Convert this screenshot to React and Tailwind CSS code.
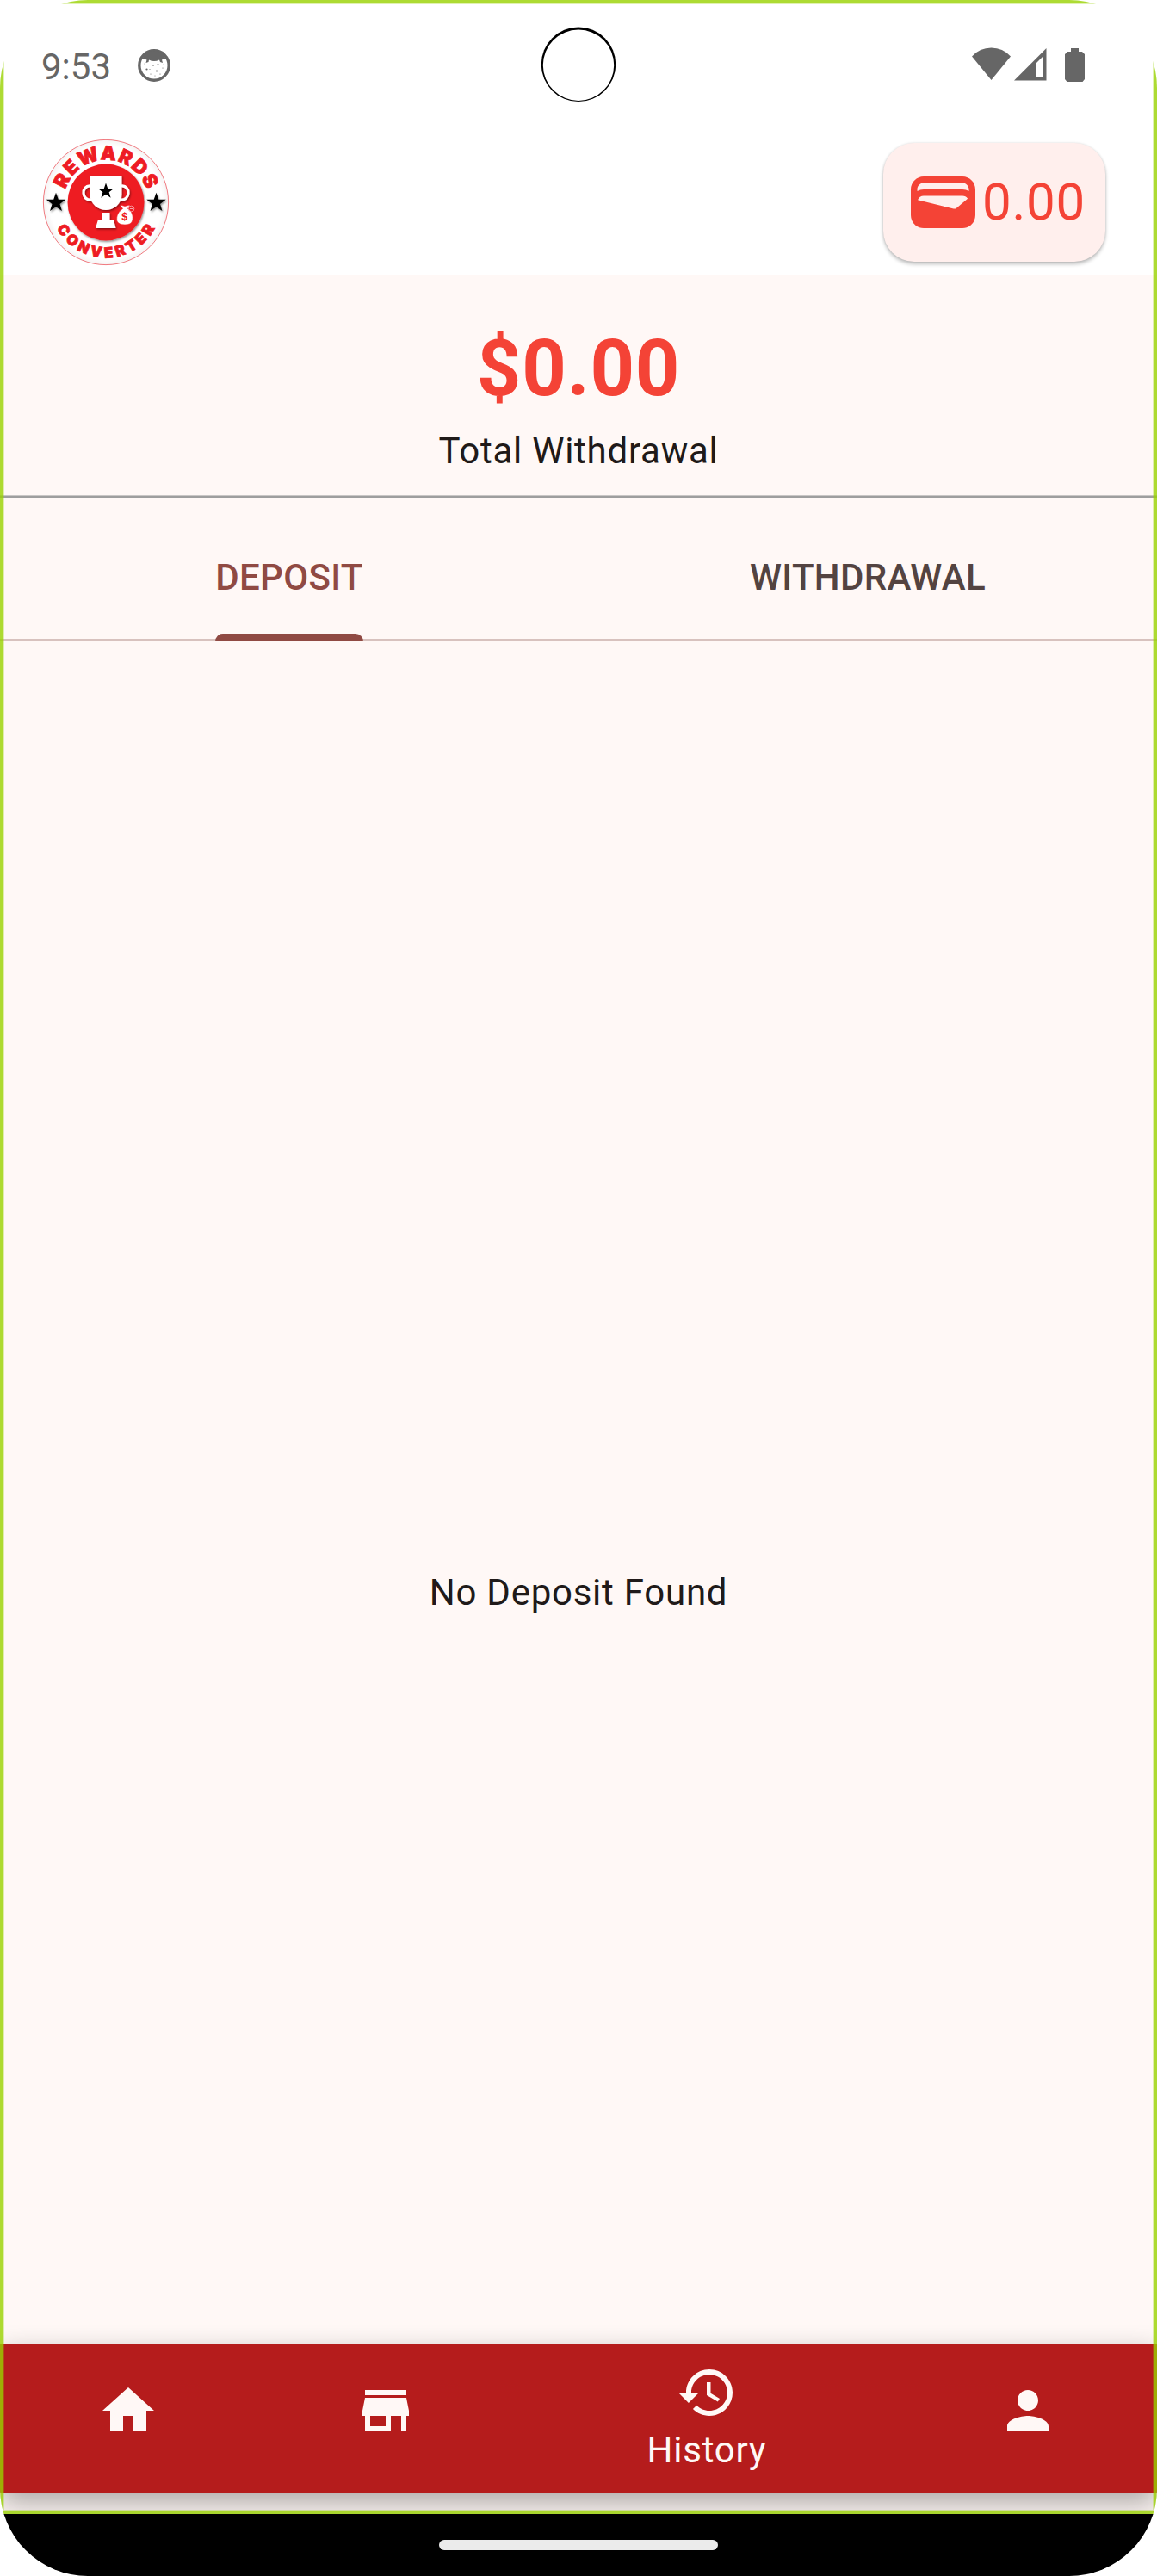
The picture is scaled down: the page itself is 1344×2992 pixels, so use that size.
import React from "react";

function Star({ cx, cy, r }) {
  const pts = Array.from({ length: 10 }, (_, i) => {
    const a = (Math.PI / 5) * i - Math.PI / 2;
    const d = i % 2 ? r * 0.4 : r;
    return `${cx + d * Math.cos(a)},${cy + d * Math.sin(a)}`;
  }).join(" ");
  return <polygon points={pts} fill="#000" />;
}

function Logo() {
  return (
    <svg width="152" height="152" viewBox="-76 -76 152 152" className="block">
      <defs>
        <path id="arcTop" d="M-46.200 16.800A49.200 49.200 0 1 1 46.200 16.800" />
        <path id="arcBottom" d="M-64.500 0A64.500 64.500 0 0 0 64.500 0" />
        <filter id="soft" x="-20%" y="-20%" width="150%" height="150%">
          <feDropShadow dx="1" dy="1.5" stdDeviation="1.2" floodColor="#000" floodOpacity="0.45" />
        </filter>
        <radialGradient id="rim">
          <stop offset="0.9" stopColor="#fff" />
          <stop offset="1" stopColor="#f5f3f3" />
        </radialGradient>
      </defs>
      <circle r="72.6" fill="url(#rim)" stroke="#ee6a70" strokeWidth="0.9" />
      <circle r="44.5" fill="#ee1c24" filter="url(#soft)" />
      <g fill="#ee1c24" stroke="#ee1c24" strokeWidth="0.8" fontFamily="Inter, sans-serif" fontWeight="900" textAnchor="middle">
        <text fontSize="22.5" letterSpacing="1.5">
          <textPath href="#arcTop" startOffset="50.4%">REWARDS</textPath>
        </text>
        <text fontSize="17" letterSpacing="4">
          <textPath href="#arcBottom" startOffset="51%">CONVERTER</textPath>
        </text>
      </g>
      <g filter="url(#soft)">
        <Star cx={-58} cy={0.5} r={11.8} />
        <Star cx={58.5} cy={0.5} r={11.8} />
      </g>
      <g filter="url(#soft)">
        <path d="M-18 -19C-29 -20 -29 -1 -16 -3M18 -19C29 -20 29 -1 16 -3" fill="none" stroke="#fff" strokeWidth="3.2" />
        <path d="M-18.5 -31H18.5V-9C18.5 2 9 9 0 9S-18.5 2 -18.5 -9Z" fill="#fff" />
        <path d="M-4.5 12H4.5V20H9L11.5 30H-12L-9 20H-4.5Z" fill="#fff" />
      </g>
      <Star cx={0} cy={-13} r={9.6} />
      <path d="M16.500 3L22 4.500L28 3L25.500 7.500C30 10 32.500 16 30.500 22Q29 26 22 26T13 22C11.500 16 15 10 19.500 7.500Z" fill="#fff" stroke="#ee1c24" strokeWidth="0.6" />
      <circle cx="29.500" cy="7.500" r="3.300" fill="none" stroke="#f7a5a8" strokeWidth="0.9" />
      <path d="M27.800 7.500H31.200" stroke="#f7a5a8" />
      <text x="21.800" y="21" textAnchor="middle" fontSize="11.500" fontWeight="700" fontFamily="Inter, sans-serif" fill="#ee1c24">$</text>
    </svg>
  );
}

function StatusBar() {
  return (
    <div className="flex h-[154px] justify-between pl-[48px] pr-[84px]">
      <div className="flex w-[261px] items-start">
        <span className="mt-[53px] w-[112px] text-[42px] leading-[50px] text-[#666]">9:53</span>
        <svg width="38" height="38" viewBox="0 0 38 38" className="mt-[57px]">
          <circle cx="19" cy="19" r="17.2" fill="#fff" stroke="#666" strokeWidth="3.400" />
          <path d="M5 12Q9 2 19 2T33 12L30 11.500L28 12.500L29 16L26 15L25 12.500Q19 15.500 13 12.500L12.500 15L9.500 16L10.500 12.500L8 11.500Z" fill="#666" />
          <g fill="#666">
            <circle cx="10.500" cy="23.500" r="1.100" /><circle cx="23.500" cy="18" r="1" /><circle cx="22" cy="25.500" r="1.100" />
            <circle cx="18" cy="19.500" r="0.600" /><circle cx="29" cy="22" r="0.600" /><circle cx="15" cy="29" r="0.600" />
            <circle cx="26" cy="29" r="0.600" /><circle cx="14" cy="23.500" r="0.500" /><circle cx="8" cy="17" r="0.500" />
            <circle cx="20" cy="31" r="0.500" /><circle cx="30" cy="18" r="0.500" />
          </g>
        </svg>
      </div>
      <div className="flex w-[726px] justify-center">
        <svg width="88" height="88" viewBox="0 0 88 88" className="mt-[31px]">
          <circle cx="44" cy="43.800" r="43.300" fill="#000" />
          <circle cx="44" cy="44.700" r="41.200" fill="#fff" />
        </svg>
      </div>
      <div className="flex w-[225px] items-start justify-end">
        <svg width="45" height="38" viewBox="0 0 45 38" className="mt-[55px]" fill="#666">
          <path d="M22.500 38L0 10.500Q9 0.500 22.500 0.500T45 10.500Z" />
        </svg>
        <svg width="38" height="38" viewBox="0 0 38 38" className="ml-[4px] mt-[56px]" fill="#666">
          <path d="M37.500 0V37.500H0ZM34 9L26 17V33.500H34Z" fillRule="evenodd" />
        </svg>
        <svg width="23" height="39" viewBox="0 0 23 39" className="ml-[21px] mt-[56px]" fill="#666">
          <path d="M7 0H16V4H20L23 7V36L20.500 39H2.500L0 36V7L3 4H7Z" />
        </svg>
      </div>
    </div>
  );
}

function Header() {
  return (
    <header className="flex h-[165px] items-start justify-between bg-white pl-[47px] pr-[60px]">
      <div className="mt-[5px]">
        <Logo />
      </div>
      <div className="mt-[12px] flex h-[138px] w-[258px] items-center rounded-[36px] bg-[#ffefed] pl-[32px] shadow-[0_3px_4px_rgba(0,0,0,0.24),0_0_3px_rgba(0,0,0,0.12)]">
        <svg width="75" height="60" viewBox="2 4 20 16" fill="#f44336">
          <path d="M18 4H6C3.790 4 2 5.790 2 8v8c0 2.210 1.790 4 4 4h12c2.210 0 4-1.790 4-4V8c0-2.210-1.790-4-4-4zm-1.860 9.770c-.24.2-.57.28-.88.2L4.150 11.250C4.450 10.520 5.160 10 6 10h12c.67 0 1.260.34 1.630.84l-3.490 2.930zM6 6h12c1.100 0 2 .9 2 2v.55c-.59-.34-1.270-.55-2-.55H6c-.73 0-1.410.21-2 .55V8c0-1.100.9-2 2-2z" />
        </svg>
        <span className="ml-[8px] text-[60px] leading-[70px] tracking-[0.75px] text-[#f44336]">0.00</span>
      </div>
    </header>
  );
}

const navItems = [
  { id: "home", width: "w-[298px]", d: "M10 20v-6h4v6h5v-8h3L12 3 2 12h3v8z" },
  { id: "store", width: "w-[300px]", d: "M20 4H4v2h16V4zm1 10v-2l-1-5H4l-1 5v2h1v6h10v-6h4v6h2v-6h1zm-9 4H6v-4h6v4z" },
  {
    id: "history",
    width: "w-[446px]",
    label: "History",
    d: "M13 3c-4.970 0-9 4.030-9 9H1l3.890 3.890.07.14L9 12H6c0-3.870 3.130-7 7-7s7 3.130 7 7-3.130 7-7 7c-1.930 0-3.680-.79-4.940-2.060l-1.420 1.420C8.270 19.990 10.510 21 13 21c4.970 0 9-4.030 9-9s-4.030-9-9-9zm-1 5v5l4.280 2.540.72-1.210-3.500-2.080V8H12z",
  },
  { id: "profile", width: "w-[300px]", d: "M12 12c2.210 0 4-1.790 4-4s-1.790-4-4-4-4 1.790-4 4 1.790 4 4 4zm0 2c-2.670 0-8 1.340-8 4v2h16v-2c0-2.660-5.330-4-8-4z" },
];

function BottomNav() {
  return (
    <nav className="flex h-[174px] bg-[#b51c1c] shadow-[0_12px_30px_rgba(0,0,0,0.32)]">
      {navItems.map((n) => (
        <div key={n.id} className={`${n.width} flex flex-col items-center ${n.label ? "pt-[21px]" : "pt-[42px]"} text-[#fff8f6]`}>
          <svg width="72" height="72" viewBox="0 0 24 24" fill="currentColor">
            <path d={n.d} />
          </svg>
          {n.label && <span className="mt-[6px] text-[42px] leading-[50px] tracking-[0.75px]">{n.label}</span>}
        </div>
      ))}
    </nav>
  );
}

export default function App() {
  return (
    <div className="h-[2992px] w-[1344px] bg-white font-[Roboto,sans-serif]">
      <div className="relative flex h-[2992px] w-[1344px] flex-col overflow-hidden rounded-[102px] bg-white">
        <StatusBar />
        <Header />
        <section className="flex h-[256px] flex-col items-center bg-[#fff8f6]">
          <div className="mt-[57px] text-[90px] font-bold leading-[106px] tracking-[0.75px] text-[#f44336]">$0.00</div>
          <div className="mt-[17px] text-[42px] leading-[50px] tracking-[0.75px] text-[#201a19]">Total Withdrawal</div>
        </section>
        <div className="h-[4px] shrink-0 border-y border-[#c9c6c5] bg-[#9e9e9e]" />
        <div className="flex h-[166px] shrink-0 border-b-[3px] border-[#d8c2be] bg-[#fff8f6] text-[42px] font-medium leading-[50px] tracking-[0.3px]">
          <div className="flex w-1/2 justify-center text-[#904a43]">
            <div className="-mb-[3px] flex flex-col justify-between pt-[67px]">
              <span>DEPOSIT</span>
              <span className="h-[9px] rounded-t-[9px] bg-[#904a43]" />
            </div>
          </div>
          <div className="flex w-1/2 justify-center pt-[67px] text-[#534341]">WITHDRAWAL</div>
        </div>
        <main className="flex h-[1977px] shrink-0 justify-center bg-[#fff8f6] pt-[1080px] text-[42px] leading-[50px] tracking-[0.75px] text-[#201a19]">
          No Deposit Found
        </main>
        <div className="h-[198px] shrink-0 bg-[#fff8f6]">
          <BottomNav />
        </div>
        <div className="relative flex h-[72px] shrink-0 justify-center bg-black pt-[30px]">
          <div className="h-[12px] w-[324px] rounded-full bg-[#ebebeb]" />
        </div>
        <div className="pointer-events-none absolute inset-x-0 top-0 h-[2920px] border-4 border-[#98d200cc] shadow-[inset_0_0_0_1px_rgba(152,210,0,0.3)]" />
      </div>
    </div>
  );
}
